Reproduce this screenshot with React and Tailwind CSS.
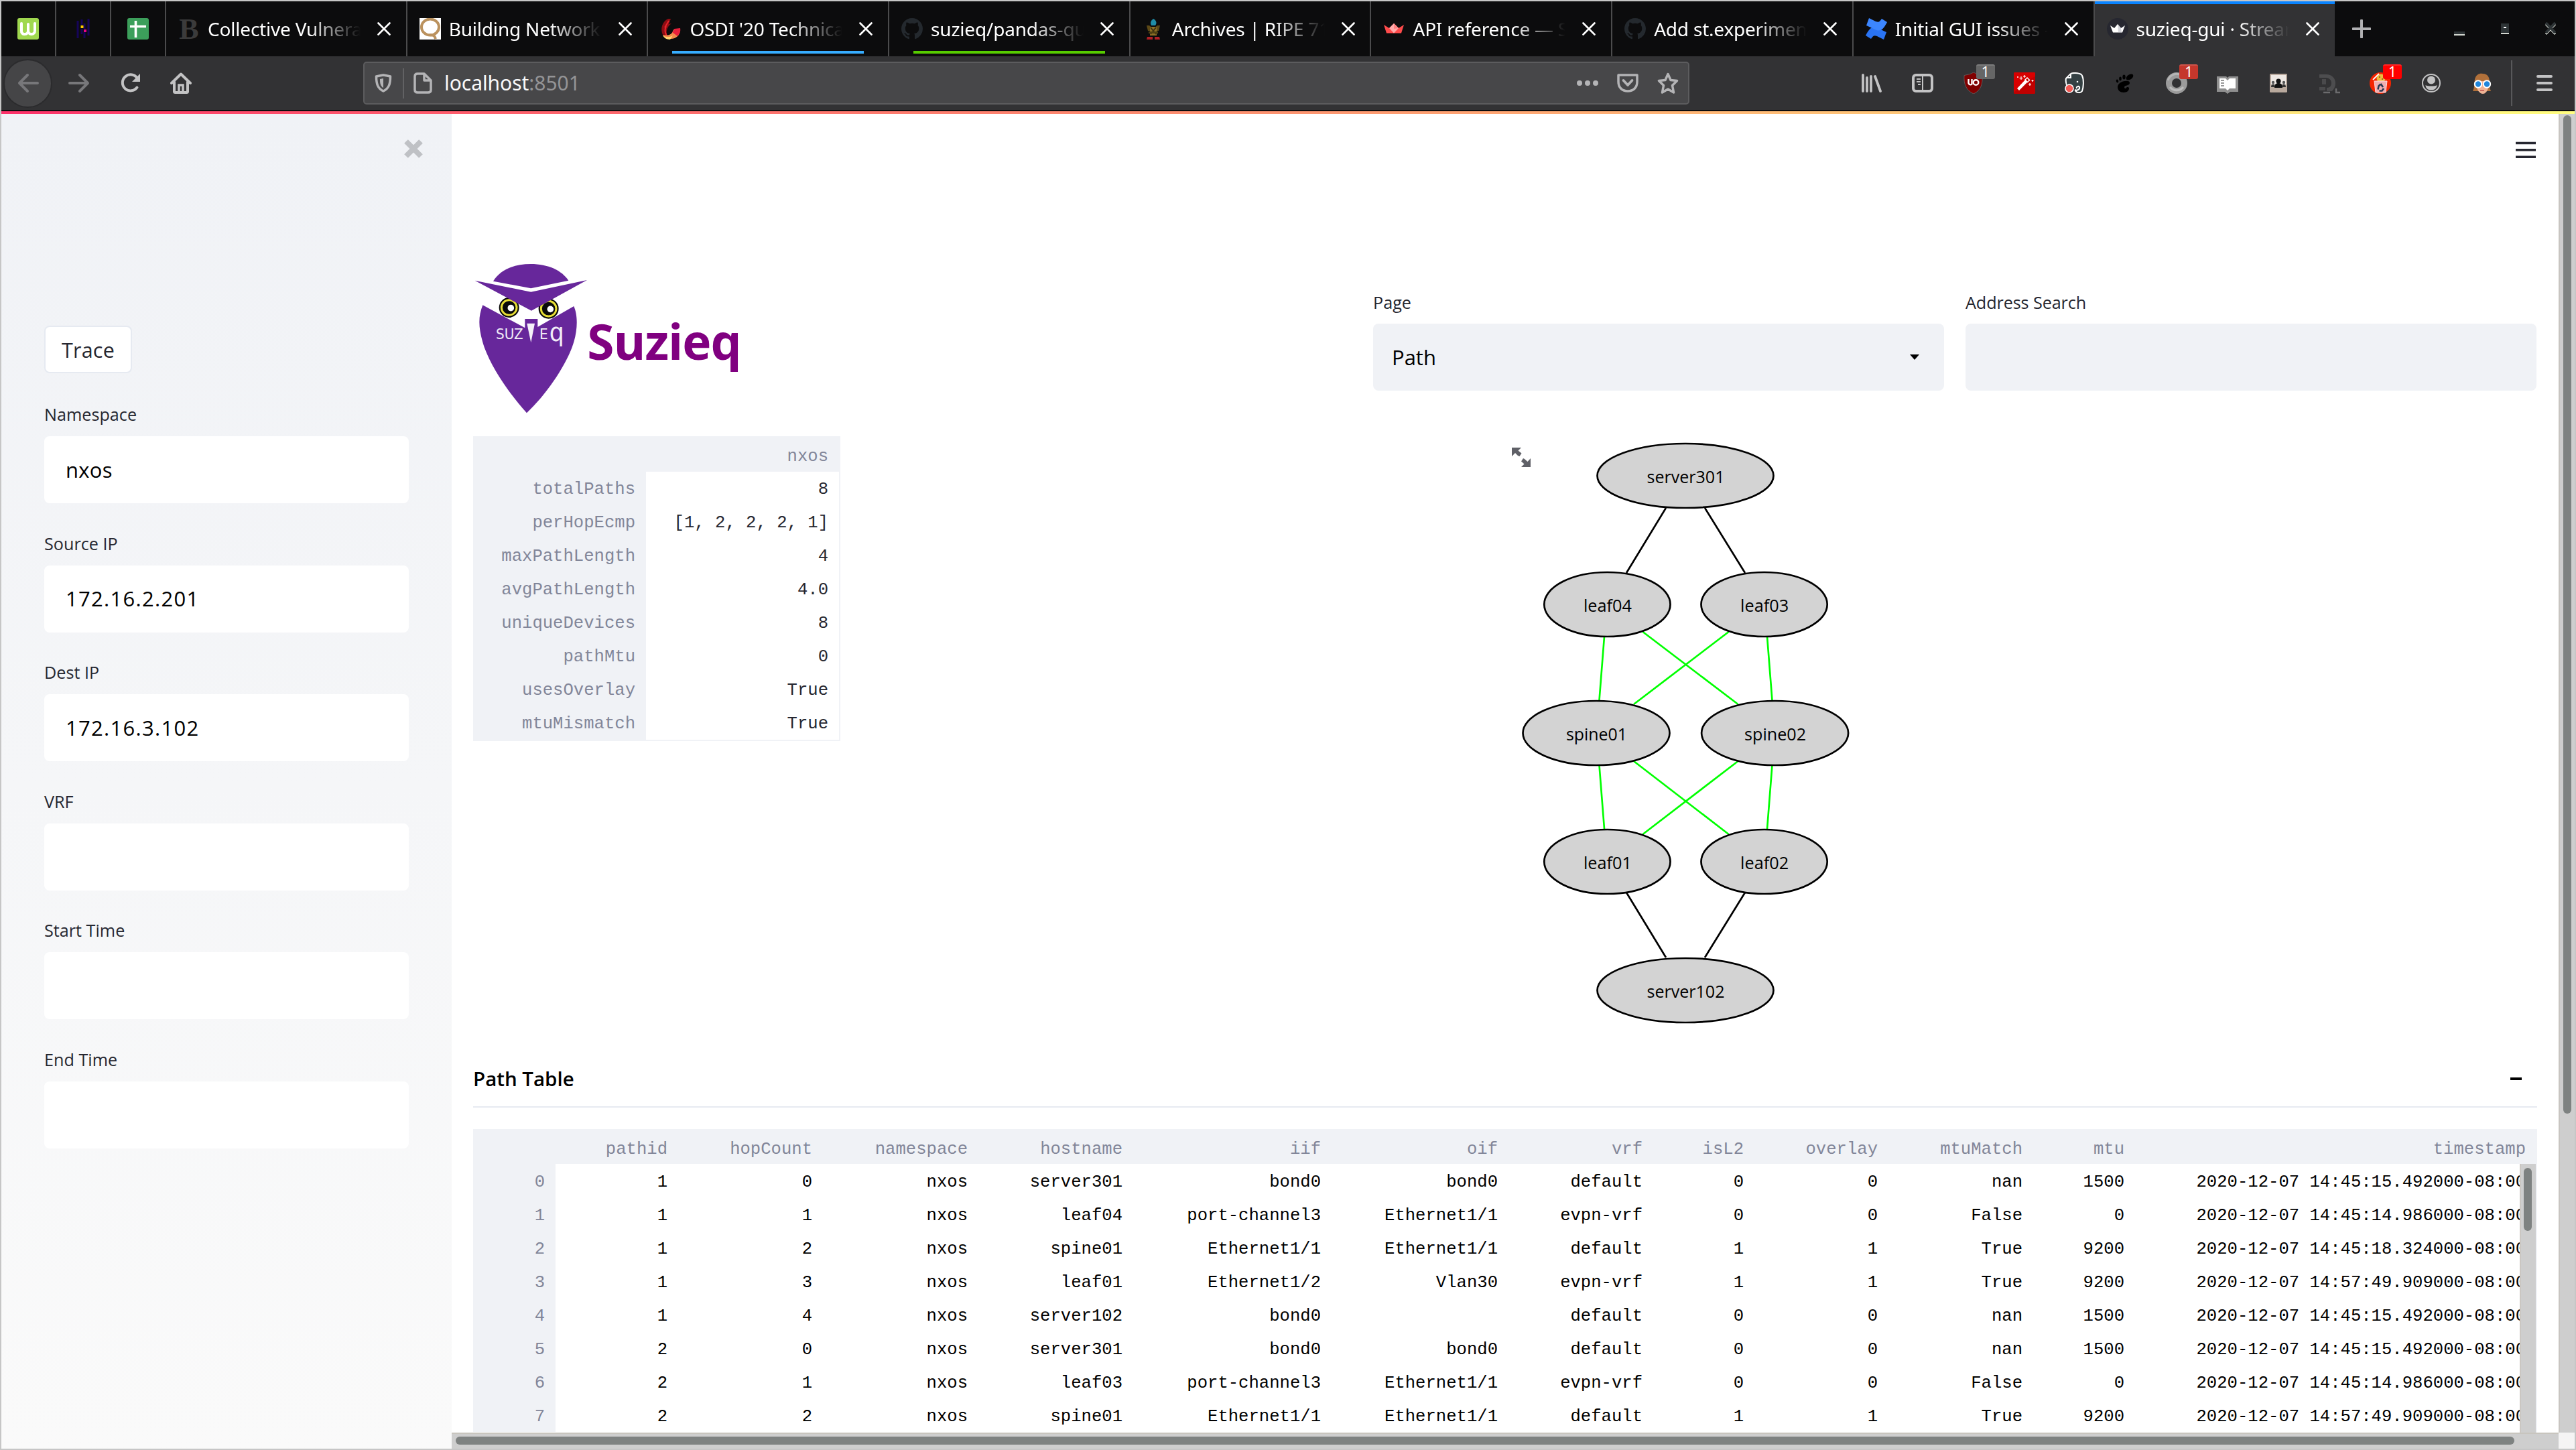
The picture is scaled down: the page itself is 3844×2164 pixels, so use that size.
import React from "react";

const SANS = "font-['Open_Sans',sans-serif]";
const MONO = "font-['Liberation_Mono',monospace]";

/* ---------- favicons ---------- */
function Ico({ children, box = "0 0 32 32", cls = "w-8 h-8" }) {
  return (
    <svg viewBox={box} className={`${cls} block shrink-0`} fill="none">
      {children}
    </svg>
  );
}

const GithubMark = () => (
  <Ico box="0 0 16 16">
    <path
      fill="#24292e"
      d="M8 0C3.58 0 0 3.58 0 8c0 3.54 2.29 6.53 5.47 7.59.4.07.55-.17.55-.38 0-.19-.01-.82-.01-1.49-2.01.37-2.53-.49-2.69-.94-.09-.23-.48-.94-.82-1.13-.28-.15-.68-.52-.01-.53.63-.01 1.08.58 1.23.82.72 1.21 1.87.87 2.33.66.07-.52.28-.87.51-1.07-1.78-.2-3.64-.89-3.64-3.95 0-.87.31-1.59.82-2.15-.08-.2-.36-1.02.08-2.12 0 0 .67-.21 2.2.82.64-.18 1.32-.27 2-.27s1.36.09 2 .27c1.53-1.04 2.2-.82 2.2-.82.44 1.1.16 1.92.08 2.12.51.56.82 1.27.82 2.15 0 3.07-1.87 3.75-3.65 3.95.29.25.54.73.54 1.48 0 1.07-.01 1.93-.01 2.2 0 .21.15.46.55.38A8.01 8.01 0 0 0 16 8c0-4.42-3.58-8-8-8z"
    />
  </Ico>
);

const favicons = {
  w: (
    <Ico>
      <rect width="32" height="32" rx="3" fill="#a0d84f" />
      <path d="M6 8v11a4.5 4.5 0 0 0 5 5c3 0 5-2 5-5V9M16 9v10c0 3 2 5 5 5s5-2 5-5V8" stroke="#fff" strokeWidth="4" strokeLinecap="round" />
    </Ico>
  ),
  pandas: (
    <Ico>
      <path d="M8 4v26M24 1v25M14 2v8M14 16v8M18 8v8M18 21v9" stroke="#150458" strokeWidth="3" />
      <rect x="12.500" y="11" width="4" height="4" fill="#ffca00" />
      <rect x="17" y="17" width="4" height="4" fill="#e70488" />
    </Ico>
  ),
  sheet: (
    <Ico>
      <rect width="32" height="32" rx="3" fill="#3c9f5b" />
      <path d="M12.500 4v25M4 12.500h24" stroke="#fff" strokeWidth="3.600" />
    </Ico>
  ),
  bold: (
    <span className="block w-8 h-8 shrink-0 overflow-visible text-center font-['Liberation_Serif',serif] font-bold text-[44px] leading-[33px] text-[#3b3b3b]">
      B
    </span>
  ),
  q: (
    <Ico>
      <rect width="32" height="32" fill="#fff" />
      <ellipse cx="16" cy="13.500" rx="13" ry="12" stroke="#bb925e" strokeWidth="4" />
      <path d="M15 25c5 0 8 1 9 6" stroke="#bb925e" strokeWidth="4" />
    </Ico>
  ),
  usenix: (
    <Ico>
      <path d="M12 1C3 5 0 16 4 25l8 5c-4-8-3-16 5-22l-4 1 3-8z" fill="#8d0d13" />
      <path d="M9 12c-3 6-1 13 3 17M13 4l-6 10" stroke="#e8232b" strokeWidth="2" />
      <path d="M30 17c0 9-7 15-16 14-6-1-9-3-10-6 8 2 14 0 16-8 3 2 7 2 10 0z" fill="#f48a4b" />
      <path d="M30 15c1 5-1 9-4 12l-8-6c2-1 3-3 3-5z" fill="#e9203c" />
      <path d="M4 26c5 3 10 3 15 0l-4 6c-6 0-9-3-11-6z" fill="#ffd36d" />
    </Ico>
  ),
  github: <GithubMark />,
  ripe: (
    <Ico>
      <path d="M16 1c-4 3-5 6-3 10h6c3-4 1-8-3-10z" fill="#1f8da8" />
      <path d="M6 11h4l6 5 6-5h4l-2 8H8z" fill="#5d4916" />
      <rect x="11" y="13" width="10" height="13" fill="#8d7026" />
      <path d="M12 14l8 10M20 14l-8 10" stroke="#3d320f" strokeWidth="2" />
      <path d="M9 20h14v3H9z" fill="#4f4112" />
      <path d="M7 28h8v4H6zM18 28h7l1 4h-8z" fill="#b01f24" />
    </Ico>
  ),
  crown: (
    <Ico>
      <path d="M1 10l8 5 7-7 7 7 8-5-4 12.500H5z" fill="#ff4b4b" />
      <path d="M9 15l7-7 7 7-7 7.500z" fill="#ffabab" />
      <path d="M16 8l7 7-7 1z" fill="#ff8080" />
    </Ico>
  ),
  confluence: (
    <Ico>
      <path d="M1 24c5-9 9-13 17-9l13 6-4 11-10-5c-5-2-6 0-9 4L0 26z" fill="#2a74f4" />
      <path d="M31 8c-5 9-9 13-17 9L1 11 5 0l10 5c5 2 6 0 9-4l8 5z" fill="#3c86ff" />
    </Ico>
  ),
  streamlit: (
    <Ico>
      <circle cx="16" cy="16" r="16" fill="#262730" />
      <path d="M5 11l6 4 5-6 5 6 6-4-4 10.500H9z" fill="#fff" />
      <path d="M16 9l5 6 1 6h-5z" fill="#d5d6dc" />
    </Ico>
  ),
};

const tabs = [
  { icon: "bold", title: "Collective Vulnera" },
  { icon: "q", title: "Building Network T" },
  { icon: "usenix", title: "OSDI '20 Technica", line: "bg-[#37adff]" },
  { icon: "github", title: "suzieq/pandas-que", line: "bg-[#57cc00]" },
  { icon: "ripe", title: "Archives | RIPE 71" },
  { icon: "crown", title: "API reference — St" },
  { icon: "github", title: "Add st.experimen" },
  { icon: "confluence", title: "Initial GUI issues -" },
];

function Close() {
  return (
    <svg viewBox="0 0 20 20" className="w-5 h-5 block shrink-0">
      <path d="M1.500 1.500l17 17M18.500 1.500l-17 17" stroke="#fff" strokeWidth="2.600" strokeLinecap="round" />
    </svg>
  );
}

function Tab({ icon, title, line, active }) {
  return (
    <div
      className={
        active
          ? "relative w-[358px] h-[82px] shrink-0 bg-[#323234] flex items-center pl-[18px] border-t-4 border-[#0a84ff] pb-1"
          : "relative w-[359.7px] h-[82px] shrink-0 flex items-center pl-[18px] border-r-2 border-[#4b4b4c]"
      }
    >
      {favicons[icon]}
      <div className="ml-3 w-[228px] overflow-hidden whitespace-nowrap text-white text-[28px] tracking-[-0.2px] leading-[44px] [mask-image:linear-gradient(to_right,black_66%,transparent)]">
        {title}
      </div>
      <div className="ml-[25px]">
        <Close />
      </div>
      {line && <div className={`absolute left-[36px] bottom-[4px] w-[286px] h-1 ${line}`} />}
    </div>
  );
}

function Pinned({ children }) {
  return <div className="w-[82px] h-[82px] shrink-0 flex items-center pl-6 border-r-2 border-[#4b4b4c]">{children}</div>;
}

function TabBar() {
  return (
    <div className="h-[82px] bg-[#0c0c0d] flex font-['Noto_Sans',sans-serif]">
      <Pinned>{favicons.w}</Pinned>
      <Pinned>{favicons.pandas}</Pinned>
      <Pinned>{favicons.sheet}</Pinned>
      {tabs.map((t) => (
        <Tab key={t.title} {...t} />
      ))}
      <Tab icon="streamlit" title="suzieq-gui · Stream" active />
      <div className="flex-1 flex items-center">
        <svg viewBox="0 0 28 28" className="w-7 h-7 ml-[26px]">
          <path d="M14 1.500v25M1.500 14h25" stroke="#b1b1b3" strokeWidth="4" strokeLinecap="round" />
        </svg>
        <svg viewBox="0 0 16 20" className="w-4 h-5 ml-[124px] mt-3">
          <rect y="8" width="16" height="4" fill="#2e3436" />
          <rect y="12" width="16" height="2" fill="#d3d7cf" />
        </svg>
        <svg viewBox="0 0 12 16" className="w-3 h-4 ml-[54px]">
          <rect width="12" height="14" fill="#2e3436" />
          <rect x="4" y="5" width="4" height="2" fill="#fff" />
          <rect y="14" width="12" height="2" fill="#d3d7cf" />
        </svg>
        <svg viewBox="0 0 16 20" className="w-4 h-5 ml-[54px]">
          <path d="M1 3l14 15M15 3L1 18" stroke="#d3d7cf" strokeWidth="3" />
          <path d="M1 1l14 15M15 1L1 16" stroke="#2e3436" strokeWidth="4" />
        </svg>
      </div>
    </div>
  );
}

/* ---------- toolbar ---------- */
function Badge({ color }) {
  return (
    <div className={`absolute left-[20px] top-[-12px] w-7 h-[22px] rounded-[3px] text-white text-[21px] leading-[22px] text-center border-t-2 border-white/15 box-border ${color}`}>
      <span className="block -mt-[2px]">1</span>
    </div>
  );
}

const extensions = [
  <Ico>
    <path d="M3 4v24M9 8v20M15 6v22M21 6l8 22" stroke="#c3c3c4" strokeWidth="3.800" strokeLinecap="round" />
  </Ico>,
  <Ico>
    <rect x="2" y="4" width="28" height="24" rx="4" stroke="#c3c3c4" strokeWidth="4" />
    <path d="M16 4v24M7 10h6M7 14h6M9 18h4" stroke="#c3c3c4" strokeWidth="2" />
  </Ico>,
  <div className="relative">
    <Ico>
      <path d="M16 0l5 2.500 8 2C30 17 27 27 16 32 5 27 1 17 2 4.500l9-2z" fill="#800000" stroke="#6b6b6b" strokeWidth=".7" />
      <path d="M8.500 10v6a3 3 0 0 0 5 1.500V10" stroke="#fff" strokeWidth="2.400" />
      <circle cx="19.500" cy="15" r="3.800" stroke="#fff" strokeWidth="2.400" />
    </Ico>
    <Badge color="bg-[#666]" />
  </div>,
  <Ico>
    <rect width="32" height="32" rx="1.500" fill="#c00000" />
    <path d="M0 1.500Q0 0 1.500 0H30.500Q32 0 32 1.500V6Q18 12 0 30z" fill="#d90000" />
    <path d="M5 24L20 8l3.500 3.500L8 27z" fill="#fff" />
    <path d="M17 11l3-3 3.500 3.500-3 3z" fill="#c00000" stroke="#fff" strokeWidth="1.500" />
    <path d="M11 6v5M8.500 8.500h5M16 4v4M14 6h4M24 16v4M22 18h4M28 11v3M26.500 12.500h3M6 6v2M5 7h2" stroke="#fff" strokeWidth="1.200" />
  </Ico>,
  <Ico>
    <path d="M9 2C14 0 25 1 26 5c3 6 2 18 0 23-2 3-9 3-10-1M9 2L2 9c-1 4 0 7 1 10" fill="#344043" stroke="#fff" strokeWidth="2" />
    <path d="M4 9h6V3h9l6 4 1 13-4-1-8 2-11-2z" fill="#344043" />
    <path d="M9 2v6H3M15 26c4 2 8-1 7-4-1-2-5-1-4 2" stroke="#fff" strokeWidth="2" />
    <circle cx="19" cy="14" r="1.300" fill="#fff" />
    <circle cx="7" cy="24" r="6" fill="#f25a55" stroke="#fff" strokeWidth="1.600" />
  </Ico>,
  <Ico>
    <g fill="#000">
      <ellipse cx="22" cy="7" rx="6" ry="3.600" transform="rotate(-35 22 7)" />
      <ellipse cx="13.500" cy="7" rx="2.200" ry="3.400" />
      <ellipse cx="8" cy="9.500" rx="1.800" ry="3" />
      <ellipse cx="3.500" cy="13" rx="1.700" ry="2.600" transform="rotate(-15 3.500 13)" />
      <path d="M19 13c-8-1-15 4-15 9 0 5 4 8 9 8 5 0 8-3 8-6s-4-2-4-1-3 2-3-1 8-2 8-6c0-2-1-3-3-3z" />
    </g>
  </Ico>,
  <div className="relative">
    <Ico>
      <circle cx="16" cy="16" r="11.500" stroke="#9b9b9b" strokeWidth="9" />
      <path d="M3 12a14 14 0 0 1 20-8" stroke="#b5b5b5" strokeWidth="3" />
      <path d="M6 22a13 13 0 0 0 20 0" stroke="#bdbdbd" strokeWidth="3" />
    </Ico>
    <Badge color="bg-[#c5372c]" />
  </div>,
  <Ico>
    <path d="M0 6h14l2 2 2-2h14v23H20l-4 3-4-3H0z" fill="#8f8f8f" />
    <path d="M4 9h9l3 3 3-3h9v15h-9l-3 3-3-3H4z" fill="#fff" />
    <path d="M6 12h5M6 16h5M6 20h5" stroke="#777" strokeWidth="1.500" />
  </Ico>,
  <Ico>
    <rect x="3" y="2" width="26" height="28" rx="1.500" fill="#b9a99d" />
    <path d="M5 4h22v14H5z" fill="#efe9e4" />
    <circle cx="16" cy="13" r="3.600" fill="#111" />
    <path d="M10 23c0-6 3-7 6-7s6 1 6 7z" fill="#111" />
    <circle cx="8" cy="15" r="2.200" fill="#555" />
    <circle cx="24" cy="15" r="2.200" fill="#555" />
    <path d="M5 22c0-4 2-5 5-4v4zM27 22c0-4-2-5-5-4v4z" fill="#333" />
  </Ico>,
  <Ico>
    <path d="M1 3h10c9 0 14 6 14 13 0 5-2 9-5 12h-8v-5c5 0 7-3 7-7s-3-8-8-8H1z" fill="#4d4d4f" />
    <path d="M1 22h9v5H1zM5 10h6v8H5z" fill="#4a4a4c" />
    <path d="M7 30h10M26 24v6h6" stroke="#6c6c6e" strokeWidth="2.500" />
  </Ico>,
  <div className="relative">
    <Ico>
      <circle cx="16" cy="16" r="16" fill="#f42400" />
      <circle cx="17" cy="9" r="6.500" fill="#eebb3f" />
      <path d="M5 11L14 2" stroke="#fff" strokeWidth="1.800" />
      <circle cx="15" cy="7" r="1" fill="#7a4a10" />
      <circle cx="19" cy="10" r="1" fill="#7a4a10" />
      <path d="M7 13h19l-2 17H9z" fill="#f0aeb0" stroke="#ffdede" strokeWidth="1" />
      <path d="M16.500 17l3.500 5M21 24l-2.500 3.500h-4M12.500 25.500l1-5 3-3" stroke="#253a52" strokeWidth="2.600" />
    </Ico>
    <Badge color="bg-[#ff0000]" />
  </div>,
  <Ico>
    <circle cx="16" cy="16" r="13" stroke="#c3c3c4" strokeWidth="2" />
    <circle cx="16" cy="11.500" r="6" fill="#c3c3c4" />
    <path d="M7.500 19c2.500 2 14.500 2 17 0 0 5-4 7.500-8.500 7.500S7.500 24 7.500 19z" fill="#c3c3c4" />
  </Ico>,
  <Ico>
    <path d="M2 28C5 22 4 16 5 10 7 3 12 1 17 2c7 0 10 5 10 12 0 6 0 10 2 14z" fill="#b1703a" />
    <path d="M8 13h17v8c0 6-4 11-8 11s-9-5-9-11z" fill="#efb394" />
    <path d="M6 13c4-1 8-5 11-10 3 4 6 8 9 10z" fill="#b1703a" />
    <circle cx="10" cy="17.500" r="5.200" fill="#1e86dc" stroke="#fff" strokeWidth="2" />
    <circle cx="23" cy="17.500" r="5.200" fill="#1e86dc" stroke="#fff" strokeWidth="2" />
    <path d="M13 27h6" stroke="#c0504d" strokeWidth="1.500" />
  </Ico>,
];

function Toolbar() {
  return (
    <div className="h-[80px] bg-[#323234] flex items-center font-['Noto_Sans',sans-serif]">
      <div className="ml-[3px] w-[73px] h-[73px] rounded-full bg-[#454547] border-2 border-[#2b2b2d] flex items-center justify-center">
        <Ico>
          <path d="M30 16H4M15 4L3 16l12 12" stroke="#77777a" strokeWidth="4" strokeLinecap="round" strokeLinejoin="round" />
        </Ico>
      </div>
      <div className="ml-6">
        <Ico>
          <path d="M2 16h26M17 4l12 12-12 12" stroke="#77777a" strokeWidth="4" strokeLinecap="round" strokeLinejoin="round" />
        </Ico>
      </div>
      <div className="ml-[45px]">
        <Ico>
          <path d="M25.500 22.500A12 12 0 1 1 26 9" stroke="#c3c3c4" strokeWidth="4" strokeLinecap="round" />
          <path d="M30 2v12H18z" fill="#c3c3c4" />
        </Ico>
      </div>
      <div className="ml-[43px]">
        <Ico>
          <path d="M2 16L16 2.500 30 16M6 14v14.500q0 1.500 1.500 1.500h17q1.500 0 1.500-1.500V14" stroke="#c3c3c4" strokeWidth="4" strokeLinecap="round" strokeLinejoin="round" />
          <path d="M13 30V19h6v11" stroke="#c3c3c4" strokeWidth="3.500" />
        </Ico>
      </div>
      <div className="ml-[256px] w-[1979px] h-16 rounded-[5px] border-2 border-[#5c5c5e] bg-[#474749] flex items-center">
        <div className="ml-3">
          <Ico>
            <path d="M16 4q6 1 10.500 2c0 11-2 18-10.500 22C7.500 24 5.500 17 5.500 6Q10 5 16 4z" stroke="#b4b4b6" strokeWidth="3.500" strokeLinejoin="round" />
            <path d="M16 9l-5 1c0 7 1 11 5 13z" fill="#b4b4b6" />
          </Ico>
        </div>
        <div className="ml-[13px] w-[2px] h-[45px] bg-[#626264]" />
        <div className="ml-3">
          <Ico>
            <path d="M18 2H8Q4 2 4 6v20q0 4 4 4h16q4 0 4-4V12zM18 2v10h10" stroke="#b4b4b6" strokeWidth="3.500" strokeLinejoin="round" />
          </Ico>
        </div>
        <div className="ml-4 text-[30px] leading-[44px] tracking-[-0.05px] text-[#f9f9fa] flex-1">
          localhost<span className="text-[#949496]">:8501</span>
        </div>
        <Ico>
          <circle cx="4" cy="16" r="4" fill="#b4b4b6" />
          <circle cx="16" cy="16" r="4" fill="#b4b4b6" />
          <circle cx="28" cy="16" r="4" fill="#b4b4b6" />
        </Ico>
        <div className="ml-7">
          <Ico>
            <path d="M2 4h28v10c0 9-6 14-14 14S2 23 2 14z" stroke="#b4b4b6" strokeWidth="3.500" strokeLinejoin="round" />
            <path d="M9.500 12l6.500 7 6.500-7" stroke="#b4b4b6" strokeWidth="3.800" strokeLinecap="round" strokeLinejoin="round" />
          </Ico>
        </div>
        <div className="ml-7 mr-[14px]">
          <Ico>
            <path d="M16 2.500l4 9 9.500 1-7 7 2 10.500-8.500-5-8.500 5 2-10.500-7-7 9.500-1z" stroke="#b4b4b6" strokeWidth="3.500" strokeLinejoin="round" />
          </Ico>
        </div>
      </div>
      <div className="ml-[256px] flex gap-[43.9px]">
        {extensions.map((e, i) => (
          <React.Fragment key={i}>{e}</React.Fragment>
        ))}
      </div>
      <div className="ml-[27px] w-[2px] h-[68px] bg-[#58585a]" />
      <svg viewBox="0 0 24 26" className="w-6 h-[26px] ml-9">
        <path d="M2 3h20M2 13h20M2 23h20" stroke="#c3c3c4" strokeWidth="4" strokeLinecap="round" />
      </svg>
    </div>
  );
}

/* ---------- sidebar ---------- */
const fields = [
  ["Namespace", "nxos", "tracking-[0.3px]"],
  ["Source IP", "172.16.2.201", "tracking-[1.3px]"],
  ["Dest IP", "172.16.3.102", "tracking-[1.3px]"],
  ["VRF", "", ""],
  ["Start Time", "", ""],
  ["End Time", "", ""],
];

function Sidebar() {
  return (
    <div className={`w-[672px] shrink-0 bg-linear-to-b from-[#f0f2f6] to-[#fafafa] px-16 ${SANS}`}>
      <div className="h-[316px] flex justify-end pt-[38px] -mr-5">
        <svg viewBox="0 0 28 28" className="w-7 h-7 mr-[-1px]">
          <path d="M3 3l22 22M25 3L3 25" stroke="#bfc1c5" strokeWidth="8" />
        </svg>
      </div>
      <div className="w-[131px] h-[71px] rounded-lg border-2 border-[#e6eaf1] bg-white text-[#262730] text-[30.500px] tracking-[0.2px] flex items-center justify-center pt-[2px]">
        Trace
      </div>
      <div className="mt-[41px] flex flex-col gap-[39.6px]">
        {fields.map(([label, value, tracking]) => (
          <div key={label}>
            <div className="h-[53px] text-[25.200px] leading-[40px] text-[#262730]">{label}</div>
            <div className={`w-[544px] h-[100px] rounded-lg bg-white text-black text-[31px] flex items-center pl-8 ${tracking}`}>{value}</div>
          </div>
        ))}
      </div>
    </div>
  );
}

/* ---------- main area ---------- */
function Owl() {
  return (
    <svg viewBox="30 0 520 750" className="w-[173.3px] h-[250px] shrink-0">
      <g fill="#67279b">
        <path d="M120 119C150 70 210 42 288 42s138 28 169 74L289 151z" />
        <path d="M73 226L262 328V288h57v36L481 231c18 40 20 110-9 187-35 90-115 210-202 291C190 620 115 510 80 415 52 330 52 280 73 226z" />
      </g>
      {[[191, 237], [368, 242]].map(([x, y]) => (
        <g key={x}>
          <circle cx={x} cy={y} r="45" fill="#0a0a0a" />
          <circle cx={x} cy={y} r="34" fill="#0a0a0a" stroke="#e8df35" strokeWidth="9" />
          <circle cx={x + 8} cy={y + 2} r="14.500" fill="#fff" />
        </g>
      ))}
      <path d="M38 116L289 167 540 114 291 251z" fill="#67279b" />
      <path d="M271 308h35l-17 86z" fill="#f4f1f8" />
      <g fill="#f1ecf7" fontFamily="DejaVu Sans, sans-serif">
        <text x="132" y="379" fontSize="65" textLength="122" lengthAdjust="spacingAndGlyphs">SUZ</text>
        <text x="327" y="379" fontSize="65" textLength="38" lengthAdjust="spacingAndGlyphs">E</text>
        <text x="371" y="388" fontSize="110" textLength="66" lengthAdjust="spacingAndGlyphs">q</text>
      </g>
    </svg>
  );
}

const summary = [
  ["totalPaths", "8"],
  ["perHopEcmp", "[1, 2, 2, 2, 1]"],
  ["maxPathLength", "4"],
  ["avgPathLength", "4.0"],
  ["uniqueDevices", "8"],
  ["pathMtu", "0"],
  ["usesOverlay", "True"],
  ["mtuMismatch", "True"],
];

function SummaryTable() {
  return (
    <div className={`w-[548px] h-[455px] bg-[#f0f2f6] pr-[2px] pb-[2px] text-[25.600px] text-right ${MONO}`}>
      <div className="h-[53px] leading-[61px] pr-4 text-[#828699]">nxos</div>
      {summary.map(([k, v]) => (
        <div key={k} className="flex h-[50px] leading-[54px]">
          <div className="w-[258px] pr-4 text-[#828699]">{k}</div>
          <div className="flex-1 pr-4 bg-white text-[#262730] whitespace-pre">{v}</div>
        </div>
      ))}
    </div>
  );
}

const nodes = [
  ["server301", 2515, 710, 132, 116],
  ["leaf04", 2398.400, 902, 94.600, 72],
  ["leaf03", 2632.600, 902, 94.600, 72],
  ["spine01", 2382, 1094, 110, 91],
  ["spine02", 2648.600, 1094, 110, 92],
  ["leaf01", 2398.400, 1286, 94.600, 72],
  ["leaf02", 2632.600, 1286, 94.600, 72],
  ["server102", 2515, 1478, 132, 116],
];

function PathGraph() {
  return (
    <svg viewBox="2200 651 640 909" className="w-[640px] h-[909px] shrink-0" fontFamily="Open Sans, sans-serif">
      <g fill="#5f6067">
        <path d="M2256 668h14l-4.500 4.500 5 4-3 4.500-2.500-1-4-4-5 5z" />
        <path d="M2284 697h-14l4.500-4.500-4.500-4 3-4.500 2 1 4.500 4 4.500-5z" />
      </g>
      <path d="M2486 758L2427 855M2544 758L2604 855M2427 1332L2486 1429M2604 1332L2544 1429" stroke="#000" strokeWidth="2.700" />
      <path
        d="M2394 950L2386.500 1045M2451.500 943L2593.500 1051M2579.500 943L2438 1051M2637 950L2644.500 1045M2386.500 1142L2394 1237M2438 1136L2579.500 1245M2593.500 1136L2451.500 1245M2644.500 1142L2637 1237"
        stroke="#0f0"
        strokeWidth="2.700"
      />
      {nodes.map(([name, x, y, rx, w]) => (
        <g key={name}>
          <ellipse cx={x} cy={y} rx={rx - 0.5} ry="48" fill="#d3d3d3" stroke="#000" strokeWidth="2.700" />
          <text x={x - w / 2 + 0.5} y={y + 11} fontSize="25" textLength={w} lengthAdjust="spacingAndGlyphs">
            {name}
          </text>
        </g>
      ))}
    </svg>
  );
}

const columns = [
  ["", "w-[123px]"],
  ["pathid", "w-[183px]"],
  ["hopCount", "w-[216px]"],
  ["namespace", "w-[232px]"],
  ["hostname", "w-[231px]"],
  ["iif", "w-[296px]"],
  ["oif", "w-[264px]"],
  ["vrf", "w-[216px]"],
  ["isL2", "w-[151px]"],
  ["overlay", "w-[200px]"],
  ["mtuMatch", "w-[216px]"],
  ["mtu", "w-[152px]"],
  ["timestamp", "w-[599px]"],
];

const rows = [
  "0|1|0|nxos|server301|bond0|bond0|default|0|0|nan|1500|2020-12-07 14:45:15.492000-08:00",
  "1|1|1|nxos|leaf04|port-channel3|Ethernet1/1|evpn-vrf|0|0|False|0|2020-12-07 14:45:14.986000-08:00",
  "2|1|2|nxos|spine01|Ethernet1/1|Ethernet1/1|default|1|1|True|9200|2020-12-07 14:45:18.324000-08:00",
  "3|1|3|nxos|leaf01|Ethernet1/2|Vlan30|evpn-vrf|1|1|True|9200|2020-12-07 14:57:49.909000-08:00",
  "4|1|4|nxos|server102|bond0||default|0|0|nan|1500|2020-12-07 14:45:15.492000-08:00",
  "5|2|0|nxos|server301|bond0|bond0|default|0|0|nan|1500|2020-12-07 14:45:15.492000-08:00",
  "6|2|1|nxos|leaf03|port-channel3|Ethernet1/1|evpn-vrf|0|0|False|0|2020-12-07 14:45:14.986000-08:00",
  "7|2|2|nxos|spine01|Ethernet1/1|Ethernet1/1|default|1|1|True|9200|2020-12-07 14:57:49.909000-08:00",
].map((r) => r.split("|"));

function PathTable() {
  return (
    <div className={`w-[3080px] mt-8 text-[25.600px] text-right whitespace-pre ${MONO}`}>
      <div className="flex h-[52px] leading-[61px] bg-[#f0f2f6] text-[#828699]">
        {columns.map(([name, w]) => (
          <div key={name} className={`${w} shrink-0 pr-4`}>
            {name}
          </div>
        ))}
      </div>
      <div className="flex h-[401px] border-r-2 border-[#f0f2f6]">
        <div className="w-[3054px] overflow-hidden">
          {rows.map((r) => (
            <div key={r[0]} className="flex h-[50px] leading-[56px]">
              {r.map((v, i) => (
                <div key={i} className={`${columns[i][1]} shrink-0 pr-4 ${i === 0 ? "bg-[#f0f2f6] text-[#828699]" : "text-black"}`}>
                  {v}
                </div>
              ))}
            </div>
          ))}
        </div>
        <div className="w-6 bg-[#cecece] border-l-2 border-[#cbc7c2] pl-1 pt-[6px]">
          <div className="w-3 h-[94px] rounded-full bg-[#7e8281]" />
        </div>
      </div>
    </div>
  );
}

function Main() {
  return (
    <div className={`flex-1 bg-white pl-8 h-[1968px] overflow-hidden ${SANS}`}>
      <div className="h-[210px] flex justify-end pt-[41px] pr-[34px]">
        <svg viewBox="0 0 30 26" className="w-[30px] h-[26px]">
          <path d="M0 2.500h30M0 12.800h30M0 23.200h30" stroke="#262730" strokeWidth="3.600" />
        </svg>
      </div>
      <div className="flex h-[271px]">
        <Owl />
        <div className="text-[#800080] font-bold text-[73px] leading-[100px] tracking-[-1px] mt-[79px] -ml-[3px]">Suzieq</div>
        <div className="ml-auto mr-[33px] flex gap-8 pt-[51px]">
          <div className="w-[852px]">
            <div className="h-[52px] leading-[40px] text-[25.200px] text-[#262730]">Page</div>
            <div className="h-[100px] rounded-lg bg-[#f0f2f6] flex items-center justify-between pl-7 pr-[37px] text-[31px] text-black">
              Path
              <svg viewBox="0 0 14 8" className="w-[14px] h-2">
                <path d="M0 0h14L7 8z" />
              </svg>
            </div>
          </div>
          <div className="w-[852px]">
            <div className="h-[52px] leading-[40px] text-[25.200px] tracking-[-0.1px] text-[#262730]">Address Search</div>
            <div className="h-[100px] rounded-lg bg-[#f0f2f6]" />
          </div>
        </div>
      </div>
      <div className="flex h-[909px]">
        <SummaryTable />
        <div className="ml-[946px]">
          <PathGraph />
        </div>
      </div>
      <div className="w-[3080px] h-[93px] border-b-2 border-[#e6eaf1] flex items-center justify-between pt-[8px] pr-[23px]">
        <div className="text-[29.500px] leading-[44px] font-semibold text-black">Path Table</div>
        <div className="w-[17px] h-1 bg-black" />
      </div>
      <PathTable />
    </div>
  );
}

export default function App() {
  return (
    <div className="w-[3844px] h-[2164px] overflow-hidden border-2 border-[#c6c6c6] bg-white flex flex-col">
      <TabBar />
      <Toolbar />
      <div className="h-[2px] bg-[#0c0c0d]" />
      <div className="h-1 bg-linear-to-r from-[#fc3069] via-[#fd9470] to-[#fffd80]" />
      <div className="flex h-[1992px]">
        <Sidebar />
        <div className="flex-1 flex flex-col">
          <div className="flex h-[1968px]">
            <Main />
            <div className="w-6 bg-[#cecece] border-l-2 border-[#c8c5c1] pl-[5px] pt-[2px]">
              <div className="w-3 h-[1490px] rounded-full bg-[#7e8281]" />
            </div>
          </div>
          <div className="flex h-6">
            <div className="flex-1 bg-[#cecece] border-t-2 border-[#c8c5be] pl-[6px] pt-1">
              <div className="w-[3072px] h-3 rounded-full bg-[#7e8281]" />
            </div>
            <div className="w-6 bg-[#f5f4f4]" />
          </div>
        </div>
      </div>
    </div>
  );
}
